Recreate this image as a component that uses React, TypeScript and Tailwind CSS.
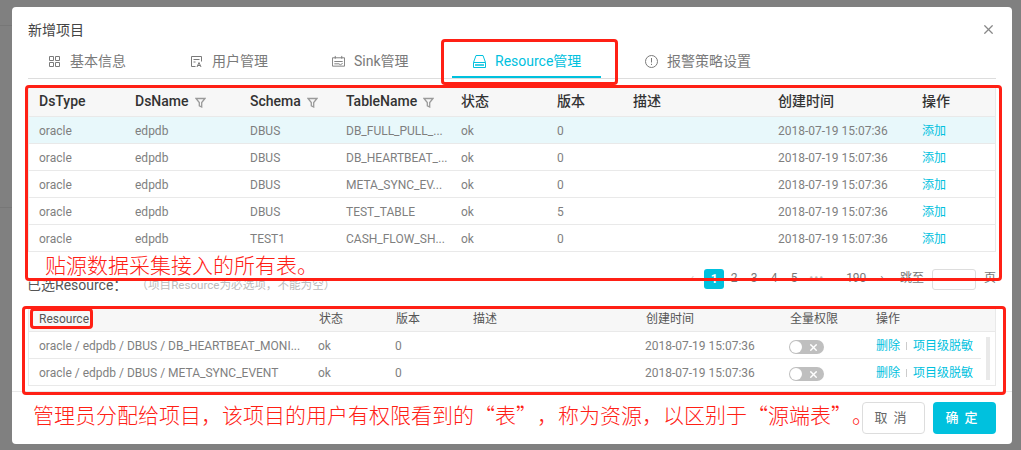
import { X } from "lucide-react";

const topRows = [
  { schema: "DBUS", table: "DB_FULL_PULL_...", version: "0" },
  { schema: "DBUS", table: "DB_HEARTBEAT_...", version: "0" },
  { schema: "DBUS", table: "META_SYNC_EV...", version: "0" },
  { schema: "DBUS", table: "TEST_TABLE", version: "5" },
  { schema: "TEST1", table: "CASH_FLOW_SH...", version: "0" },
];

const bottomRows = ["oracle / edpdb / DBUS / DB_HEARTBEAT_MONI...", "oracle / edpdb / DBUS / META_SYNC_EVENT"];

const topCols = "grid grid-cols-[96px_115px_96px_115px_96px_76px_145px_144px_1fr]";
const bottomCols = "grid grid-cols-[280px_77px_77px_173px_144px_86px_1fr]";

function Funnel() {
  return (
    <svg width="11" height="11" viewBox="0 0 11 11" className="ml-1.5 mt-px">
      <path d="M1 1.5h9L6.7 5.6V10L4.3 8.8V5.6z" fill="none" stroke="#9a9a9a" strokeWidth="1.3" />
    </svg>
  );
}

function GridIcon() {
  return (
    <svg width="13" height="13" viewBox="0 0 13 13" fill="none" stroke="currentColor">
      <path d="M1.5 1.5h4v4h-4zM7.5 1.5h4v4h-4zM1.5 7.5h4v4h-4zM7.5 7.5h4v4h-4z" />
    </svg>
  );
}

function UserDocIcon() {
  return (
    <svg width="13" height="13" viewBox="0 0 13 13" fill="none" stroke="currentColor">
      <path d="M5.5 11.5h-4v-10h10v5M3.5 4.5h6M3.5 7h2" />
      <path d="M7 12l2-4.5 2 4.5M7.8 10.5h2.4" />
    </svg>
  );
}

function SinkIcon() {
  return (
    <svg width="13" height="13" viewBox="0 0 14 13" fill="none" stroke="currentColor">
      <path d="M.5 2.5h13v9H.5zM3.5.5v3M10.5.5v3M2.5 6.5h9M2.5 9h5l1.5 1 2.5-1.5" />
    </svg>
  );
}

function DriveIcon() {
  return (
    <svg width="13" height="13" viewBox="0 0 13 13" fill="none" stroke="currentColor">
      <path d="M3 .5h7l2.5 7v5H.5v-5zM.5 7.5h12" />
      <path d="M2 10h9" strokeWidth="1.5" />
    </svg>
  );
}

function AlertIcon() {
  return (
    <svg width="13" height="13" viewBox="0 0 13 13" fill="none" stroke="currentColor">
      <circle cx="6.5" cy="6.5" r="6" />
      <path d="M6.5 3v4.5M6.5 8.8v1.2" />
    </svg>
  );
}

function Tab({ icon, label, active, className }: { icon: React.ReactNode; label: string; active?: boolean; className: string }) {
  return (
    <div
      className={`flex h-[34px] items-center gap-[9px] text-[14px] ${className} ${
        active ? "-mb-px border-b-2 border-[#00c1de] pt-0.5 text-[#00c1de]" : "text-[#7a7a7a]"
      }`}
    >
      {icon}
      {label}
    </div>
  );
}

function Toggle() {
  return (
    <div className="mt-[2px] flex h-[14px] w-[35px] items-center justify-between rounded-full bg-[#bfbfbf] pl-px pr-[5px]">
      <div className="h-3 w-3 rounded-full bg-white" />
      <X size={11} strokeWidth={3} className="text-white" />
    </div>
  );
}

export default function App() {
  return (
    <div className="relative h-[450px] w-[1021px] overflow-hidden bg-[#808080] font-['Roboto','Noto_Sans_CJK_SC',sans-serif]">
      <div className="absolute left-0 top-[25px] h-px w-3 bg-[#777777]" />
      <div className="absolute left-0 top-[207px] h-px w-3 bg-[#777777]" />

      <div className="relative ml-3 mt-[7px] h-[437px] w-[1000px] rounded bg-white">
        <div className="px-4">
          <div className="flex h-[37px] items-start justify-between pt-[13px] text-[14px] leading-5 text-[#444444]">
            <span>新增项目</span>
            <X size={15} className="mr-0 mt-[2px] text-[#888888]" />
          </div>

          <div className="flex border-b border-[#dddddd]">
            <Tab icon={<GridIcon />} label="基本信息" className="w-[142px] pl-[20px]" />
            <Tab icon={<UserDocIcon />} label="用户管理" className="w-[142px] pl-[20px]" />
            <Tab icon={<SinkIcon />} label="Sink管理" className="w-[140px] pl-[20px]" />
            <Tab icon={<DriveIcon />} label="Resource管理" active className="w-[149px] pl-[21px]" />
            <Tab icon={<AlertIcon />} label="报警策略设置" className="ml-[44px] w-[150px]" />
          </div>

          <div className="mt-2 border-x border-[#e9e9e9]">
            <div className={`${topCols} h-[30px] items-center border-b border-[#e9e9e9] bg-[#f7f7f7] text-[14px] font-medium text-[#333333]`}>
              <span className="pl-[10px]">DsType</span>
              <span className="flex items-center pl-[10px]">DsName<Funnel /></span>
              <span className="flex items-center pl-[10px]">Schema<Funnel /></span>
              <span className="flex items-center pl-[10px]">TableName<Funnel /></span>
              <span className="pl-[10px]">状态</span>
              <span className="pl-[10px]">版本</span>
              <span className="pl-[10px]">描述</span>
              <span className="pl-[10px]">创建时间</span>
              <span className="pl-[10px]">操作</span>
            </div>
            {topRows.map((row, i) => (
              <div
                key={row.table}
                className={`${topCols} h-[27px] items-center border-b border-[#e9e9e9] pt-0.5 text-[12px] text-[#7f7f7f] ${i === 0 ? "bg-[#e8f8fb]" : ""}`}
              >
                <span className="pl-[10px]">oracle</span>
                <span className="pl-[10px]">edpdb</span>
                <span className="pl-[10px]">{row.schema}</span>
                <span className="pl-[10px]">{row.table}</span>
                <span className="pl-[10px]">ok</span>
                <span className="pl-[10px]">{row.version}</span>
                <span />
                <span className="pl-[10px]">2018-07-19 15:07:36</span>
                <span className="pl-[10px] text-[#00c1de]">添加</span>
              </div>
            ))}
          </div>

          <div className="relative flex h-[46px] items-start justify-end pt-[17px] text-[12px] text-[#777777]">
            <div className="absolute -left-px top-[23px] flex items-center gap-[9px]">
              <span className="text-[14px] text-[#555555]">已选Resource：</span>
              <span className="text-[11.6px] text-[#bbbbbb]">（项目Resource为必选项，不能为空）</span>
            </div>
            <span className="mr-[10px] text-[#cccccc]">‹</span>
            <span className="flex h-5 w-5 items-center justify-center rounded-[3px] bg-[#00c1de] font-bold text-white">1</span>
            <span className="w-5 text-center">2</span>
            <span className="w-5 text-center">3</span>
            <span className="w-5 text-center">4</span>
            <span className="w-5 text-center">5</span>
            <span className="ml-[5px] w-4 tracking-[1px] text-[#bbbbbb]">•••</span>
            <span className="ml-[21px]">190</span>
            <span className="ml-[14px]">›</span>
            <span className="ml-[16px]">跳至</span>
            <span className="ml-2 h-[21px] w-[44px] rounded-[3px] border border-[#dddddd] bg-white" />
            <span className="ml-2">页</span>
          </div>

          <div className="mt-[10px] border-x border-[#e9e9e9]">
            <div className={`${bottomCols} h-6 items-center border-b border-[#e9e9e9] bg-[#f7f7f7] pb-0.5 text-[12px] text-[#555555]`}>
              <span className="pl-[10px]">Resource</span>
              <span className="pl-[10px]">状态</span>
              <span className="pl-[10px]">版本</span>
              <span className="pl-[10px]">描述</span>
              <span className="pl-[10px]">创建时间</span>
              <span className="pl-[10px]">全量权限</span>
              <span className="pl-[10px]">操作</span>
            </div>
            <div className="relative">
              {bottomRows.map((row) => (
                <div key={row} className={`${bottomCols} h-[27px] items-center border-b border-[#e9e9e9] pt-0.5 text-[12px] text-[#7f7f7f]`}>
                  <span className="truncate pl-[10px]">{row}</span>
                  <span className="pl-[9px]">ok</span>
                  <span className="pl-[9px]">0</span>
                  <span />
                  <span className="pl-[9px]">2018-07-19 15:07:36</span>
                  <span className="pl-[9px]"><Toggle /></span>
                  <span className="flex items-center pl-[10px] text-[#00c1de]">
                    删除<span className="mx-[6px] h-2 w-px bg-[#cccccc]" />项目级脱敏
                  </span>
                </div>
              ))}
              <div className="absolute right-0 top-[26px] h-px w-[14px] bg-white" />
              <div className="absolute right-[5px] top-[5px] h-[43px] w-[4px] bg-[#e9e9e9]" />
            </div>
          </div>
        </div>

        <div className="mt-[5px] flex h-[46px] items-start justify-end gap-2 border-t border-[#e9e9e9] px-4 pt-[10px]">
          <button className="h-8 w-[63px] rounded border border-[#dddddd] bg-white text-[13px] tracking-[6px] text-[#666666]">取消</button>
          <button className="h-8 w-[63px] rounded bg-[#00c1de] text-[13px] font-medium tracking-[6px] text-white">确定</button>
        </div>
      </div>

      {/* red notes drawn over the screenshot */}
      <div className="absolute left-[441px] top-[39px] h-[46px] w-[177px] rounded-sm border-[3px] border-[#ff2015]" />
      <div className="absolute left-[25px] top-[85px] h-[196px] w-[977px] rounded-sm border-[3px] border-[#ff2015]" />
      <div className="absolute left-[22px] top-[306px] h-[89px] w-[984px] rounded-sm border-[3px] border-[#ff2015]" />
      <div className="absolute left-[30px] top-[308px] h-[21px] w-[63px] rounded-sm border-[3px] border-[#ff2015]" />
      <div className="absolute left-[45px] top-[250px] font-['Noto_Sans_CJK_SC',sans-serif] text-[21px] font-light leading-[28px] text-[#ff2015] [text-spacing-trim:space-all]">贴源数据采集接入的所有表。</div>
      <div className="absolute left-[33px] top-[400px] whitespace-nowrap font-['Noto_Sans_CJK_SC',sans-serif] text-[21px] font-light leading-[28px] text-[#ff2015] [text-spacing-trim:space-all]">
        管理员分配给项目，该项目的用户有权限看到的“表”，称为资源，以区别于“源端表”。
      </div>
    </div>
  );
}
